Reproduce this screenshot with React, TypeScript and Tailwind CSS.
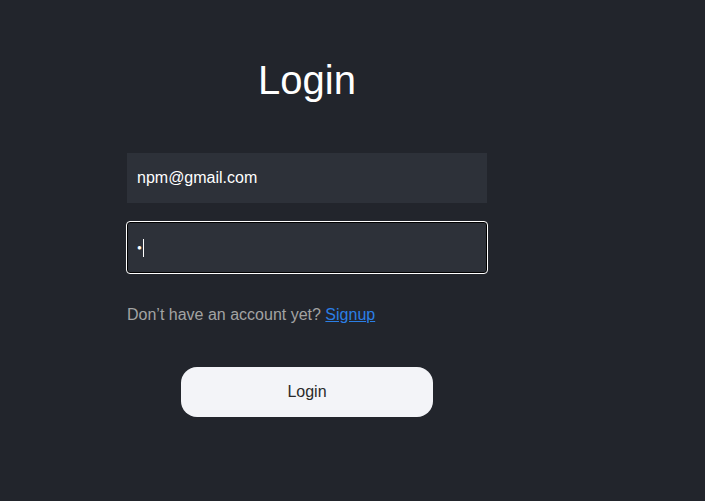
import React from 'react';

const App: React.FC = () => {
    return (
        <div className="min-h-[501px] w-full bg-[#22252c] font-['Liberation_Sans',Arial,sans-serif]">
            <main className="ml-[127px] flex w-[360px] flex-col pt-[57px]">
                <h1 className="text-center text-[40px] leading-[46px] text-white">Login</h1>

                <div className="mt-[50px] flex h-[50px] items-center bg-[#2d3139] px-[10px] text-base text-white">
                    npm@gmail.com
                </div>

                <div className="-mx-px mt-[18px] flex h-[53px] items-center rounded-[4px] border border-white bg-[#2d3139] px-[10px] shadow-[inset_0_0_0_1px_#000]">
                    <span className="text-[8px] leading-none text-white">●</span>
                    <span className="ml-px h-[18px] w-px bg-white" />
                </div>

                <p className="mt-[30px] text-base leading-[22px] text-[#a3a3a3]">
                    Don’t have an account yet?{' '}
                    <a href="#" className="text-[#2b7fe6] underline">
                        Signup
                    </a>
                </p>

                <button className="mx-auto mt-[41px] h-[50px] w-[252px] rounded-[16px] bg-[#f3f4f8] text-base text-[#2a2a2a]">
                    Login
                </button>
            </main>
        </div>
    );
};

export default App;
